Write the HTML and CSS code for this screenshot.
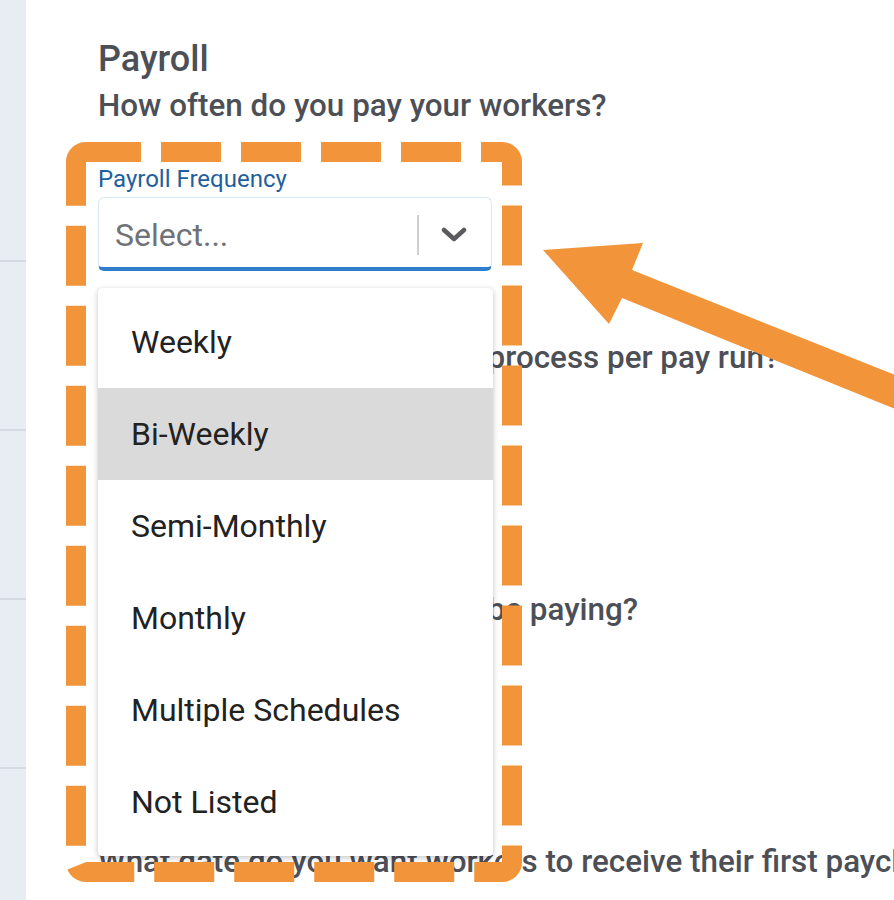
FILE: index.html
```html
<!DOCTYPE html>
<html lang="en">
<head>
    <meta charset="UTF-8">
    <meta name="viewport" content="width=device-width, initial-scale=1.0">
    <title>Payroll</title>
    <link rel="stylesheet" href="styles.css">
</head>
<body>
    <div class="sidebar">
        <div class="nav-item first"></div>
        <div class="nav-item"></div>
        <div class="nav-item"></div>
        <div class="nav-item"></div>
    </div>

    <div class="main">
        <h1 class="title">Payroll</h1>

        <div class="section">
            <h2 class="question">How often do you pay your workers?</h2>
            <div class="label">Payroll Frequency</div>
            <div class="field open">
                <div class="select">
                    <span class="placeholder">Select...</span>
                    <span class="sep"></span>
                    <svg class="chev" width="26" height="16" viewBox="0 0 26 16">
                        <path d="M3 3 L13 12 L23 3" fill="none" stroke="#5b5b5f" stroke-width="4.5" stroke-linecap="round" stroke-linejoin="round"/>
                    </svg>
                </div>
                <div class="menu">
                    <div class="option">Weekly</div>
                    <div class="option active">Bi-Weekly</div>
                    <div class="option">Semi-Monthly</div>
                    <div class="option">Monthly</div>
                    <div class="option">Multiple Schedules</div>
                    <div class="option">Not Listed</div>
                </div>
            </div>
        </div>

        <div class="section">
            <h2 class="question">How many workers will you process per pay run?</h2>
            <div class="label">Number of Workers</div>
            <div class="field"><div class="select"></div></div>
        </div>

        <div class="section">
            <h2 class="question">How many workers will you be paying?</h2>
            <div class="label">Worker Count</div>
            <div class="field"><div class="select"></div></div>
        </div>

        <div class="section">
            <h2 class="question">What date do you want workers to receive their first paycheck?</h2>
        </div>
    </div>

    <!-- annotation drawn over the page -->
    <svg class="marks" width="894" height="900" viewBox="0 0 894 900">
        <rect x="76" y="152" width="436" height="720" rx="10" fill="none" stroke="#f2953a" stroke-width="20" stroke-dasharray="60 20" stroke-dashoffset="5"/>
        <polygon points="543,250 643,243 632,270 900,377 900,411 622,298 609,324" fill="#f2953a"/>
    </svg>
</body>
</html>
```

FILE: styles.css
```css
*{
    margin: 0; padding: 0;
    box-sizing: border-box;
}
html, body{
    height: 900px;
    overflow: hidden;
}
body{
    font-family: Roboto, "Liberation Sans", sans-serif;
    background: #fff;
    display: flex;
    position: relative;
}
.sidebar{
    width: 26px;
    flex-shrink: 0;
    background: #e8ecf3;
    display: flex;
    flex-direction: column;
}
.nav-item{
    height: 169px;
    flex-shrink: 0;
    border-bottom: 2px solid #d5dbe3;
}
.nav-item.first{
    height: 262px;
}
.main{
    flex: 1;
    min-width: 0;
    padding: 37px 0 0 72px;
}
.title{
    font-size: 36px;
    font-weight: 500;
    line-height: 44px;
    color: #4d4f57;
    margin-bottom: 5px;
}
.section{
    margin-bottom: 67px;
}
.question{
    font-size: 31.4px;
    font-weight: 500;
    line-height: 40px;
    color: #4d4f57;
    white-space: nowrap;
    margin-bottom: 39px;
}
.label{
    font-size: 24px;
    line-height: 28px;
    color: #1f5f9e;
    margin-bottom: 4px;
}
.field{
    position: relative;
    width: 394px;
}
.select{
    height: 74px;
    border: 1px solid #d6e7f6;
    border-bottom: 4px solid #2f7dcc;
    border-radius: 6px;
    background: #fff;
    display: flex;
    align-items: center;
    padding: 4px 24px 0 16px;
}
.placeholder{
    flex: 1;
    font-size: 32px;
    color: #707278;
}
.sep{
    width: 2px;
    height: 40px;
    background: #cfcfcf;
    margin-right: 22px;
}
.chev{
    display: block;
}
.menu{
    position: absolute;
    top: calc(100% + 17px);
    left: 0;
    width: 395px;
    background: #fff;
    padding: 8px 0;
    border-radius: 4px;
    box-shadow: 0 2px 6px rgba(0, 0, 0, 0.22), 0 0 1px rgba(0, 0, 0, 0.15);
    z-index: 2;
}
.option{
    height: 92px;
    display: flex;
    align-items: center;
    padding-left: 33px;
    font-size: 32px;
    color: #222;
}
.option.active{
    background: #dadada;
}
.marks{
    position: absolute;
    top: 0;
    left: 0;
    z-index: 5;
    pointer-events: none;
}
```
